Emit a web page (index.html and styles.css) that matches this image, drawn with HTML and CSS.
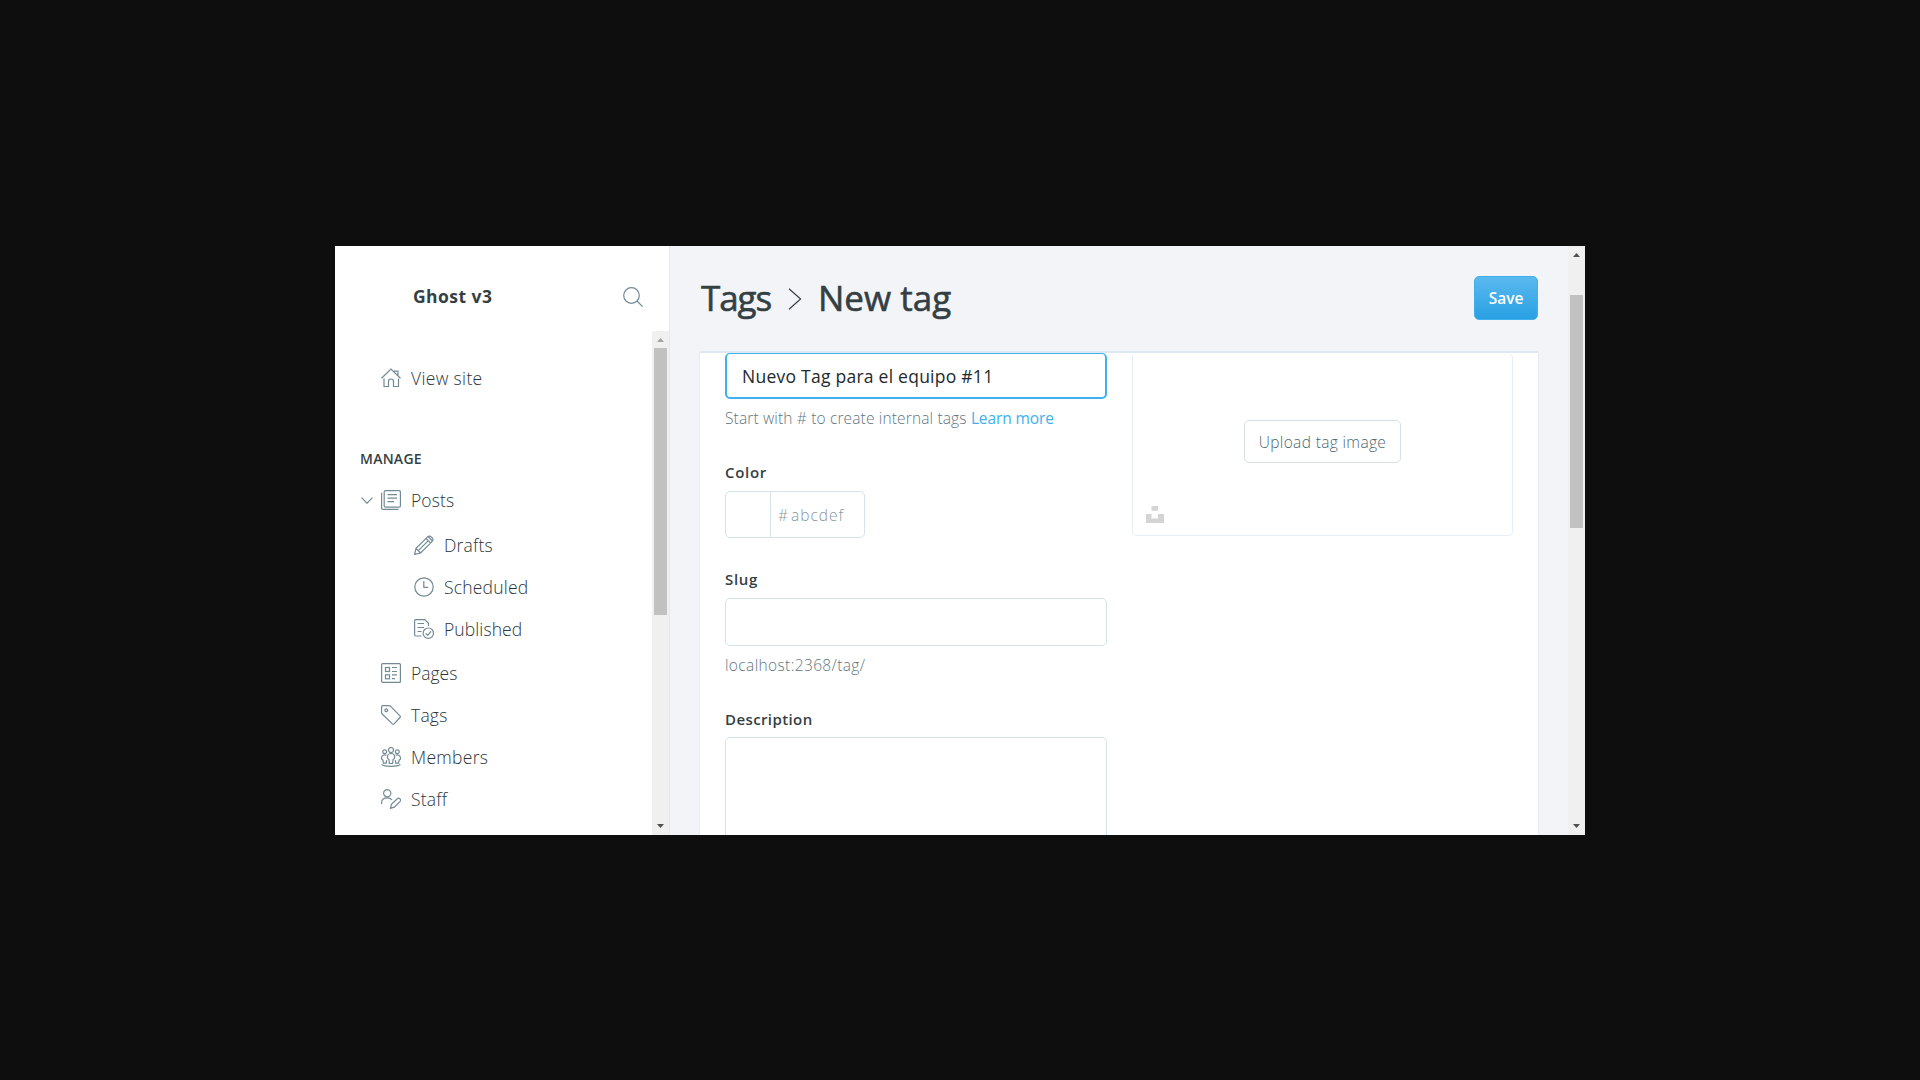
FILE: index.html
```html
<!DOCTYPE html>
<html lang="en">
<head>
<meta charset="utf-8">
<title>Ghost v3 - New tag</title>
<link rel="stylesheet" href="styles.css">
</head>
<body>
<div class="window">
  <aside class="sidebar">
    <header class="site-head">
      <span class="site-name">Ghost v3</span>
      <svg class="icon" viewBox="0 0 20 20"><circle cx="8.500" cy="8.500" r="7.800"/><path d="M14 14l5.600 5.600"/></svg>
    </header>
    <div class="side-body">
      <nav class="nav">
        <a class="nav-item view-site">
          <svg class="icon" viewBox="0 0 20 20"><path d="M.5 10.200L10 1l9.500 9.200M3 10.500V18.500h4.500V13.500a2.500 2.500 0 0 1 5 0V18.500H17.500V10.500M13 3.200h4V7.500"/></svg>
          <span>View site</span>
        </a>
        <h2 class="nav-title">MANAGE</h2>
        <a class="nav-item posts">
          <svg class="chevron" viewBox="0 0 12 7"><path d="M.5.7L6 6.200 11.500.7"/></svg>
          <svg class="icon" viewBox="0 0 20 20"><rect x="3.200" y=".6" width="16.200" height="16.500" rx="1.200"/><path d="M.6 2.800V18a1.400 1.400 0 0 0 1.400 1.400H17.500M6.500 4.700h9.500M6.500 8.200h9.500M6.500 11.600h6.500"/></svg>
          <span>Posts</span>
        </a>
        <div class="subnav">
          <a class="nav-item">
            <svg class="icon" viewBox="0 0 20 20"><path d="M.6 19.400l1.400-6L13.600 1.800a2.500 2.500 0 0 1 3.600 0l1 1a2.500 2.500 0 0 1 0 3.600L6.600 18zM2 13.400L6.600 18M12 3.400L16.600 8M14 1.500l4.500 4.500M4.300 15.700L14.300 5.700"/></svg>
            <span>Drafts</span>
          </a>
          <a class="nav-item">
            <svg class="icon" viewBox="0 0 20 20"><circle cx="10" cy="10" r="9.200"/><path d="M9.800 4v6.300h4.400"/></svg>
            <span>Scheduled</span>
          </a>
          <a class="nav-item published">
            <svg class="icon" viewBox="0 0 20 20"><path d="M7.500 17H1.800a1.200 1.200 0 0 1-1.200-1.200V1.800A1.200 1.200 0 0 1 1.800.6h9L14.500 4.300V7M3.500 4.500h6.500M3.500 8.500h6.500M3.500 12.500h4"/><circle cx="14.300" cy="14.200" r="5.200"/><path d="M11.700 14.400l2 2 3.300-4"/></svg>
            <span>Published</span>
          </a>
        </div>
        <a class="nav-item pages">
          <svg class="icon" viewBox="0 0 20 20"><rect x=".6" y=".6" width="18.800" height="18.800" rx="1"/><rect x="4.500" y="4.500" width="4" height="4"/><rect x="4.500" y="11.800" width="4" height="4"/><path d="M11 4.500h5M11 8.500h5M11 11.800h5M11 15.600h3"/></svg>
          <span>Pages</span>
        </a>
        <a class="nav-item">
          <svg class="icon" viewBox="0 0 20 20"><path d="M.6 1.800A1.200 1.200 0 0 1 1.800.6H8a2 2 0 0 1 1.400.6L19 10.800a1.200 1.200 0 0 1 0 1.700L13 18.900a1.200 1.200 0 0 1-1.700 0L1.200 9A2 2 0 0 1 .6 7.600z"/><circle cx="5.300" cy="5.300" r="1.400"/></svg>
          <span>Tags</span>
        </a>
        <a class="nav-item members">
          <svg class="icon" viewBox="0 0 20 20"><circle cx="10" cy="3" r="2.500"/><circle cx="3.700" cy="4.800" r="1.900"/><circle cx="16.300" cy="4.800" r="1.900"/><path d="M8.300 16.500L8 12.500 6.500 11.500V9.500a3.500 3 0 0 1 7 0v2L12 12.500l-.3 4zM5.500 8.300C3 7 .6 8.500.6 10.500v1.800l1.300.9.500 3H5.200l.5-3M14.500 8.300c2.500-1.300 4.900.2 4.900 2.200v1.800l-1.300.9-.5 3H14.800l-.5-3M.6 17.500c3 2.400 15.800 2.400 18.800 0"/></svg>
          <span>Members</span>
        </a>
        <a class="nav-item">
          <svg class="icon" viewBox="0 0 20 20"><circle cx="6.200" cy="4.200" r="3.600"/><path d="M.6 15V13.500C.6 10.500 3 8.800 6.200 8.800c2 0 3.800.8 4.800 2.200M9.500 19.300l.9-4 5.900-5.600c1.800-1.500 4.400.9 2.800 2.700l-5.800 5.800z"/></svg>
          <span>Staff</span>
        </a>
      </nav>
      <div class="scrollbar side-scroll">
        <i class="arrow up dim"></i><i class="thumb"></i><i class="arrow down"></i>
      </div>
    </div>
  </aside>
  <main class="main">
    <header class="main-head">
      <h1 class="title">
        <span class="crumb">Tags</span>
        <svg class="sep" viewBox="0 0 14 22"><path d="M1 .7L12.600 11 1 21.300"/></svg>
        <span>New tag</span>
      </h1>
      <button class="save">Save</button>
    </header>
    <section class="viewport">
      <div class="card">
        <div class="col">
          <div class="input name">Nuevo Tag para el equipo #11</div>
          <p class="help">Start with # to create internal tags <a class="link">Learn more</a></p>
          <label class="label color-label">Color</label>
          <div class="input color"><span class="swatch"></span><span class="hash">#</span><span class="hex">abcdef</span></div>
          <label class="label slug-label">Slug</label>
          <div class="input slug"></div>
          <p class="help host">localhost:2368/tag/</p>
          <label class="label">Description</label>
          <div class="input desc"></div>
        </div>
        <div class="uploader">
          <button class="upload">Upload tag image</button>
          <svg class="unsplash" viewBox="0 0 18 17"><path d="M5.500 0h6.500v4.700H5.500zM0 8h5.500v4.500h6.500V8H18v9H0z"/></svg>
        </div>
      </div>
    </section>
  </main>
  <div class="scrollbar main-scroll">
    <i class="arrow up"></i><i class="thumb"></i><i class="arrow down"></i>
  </div>
</div>
</body>
</html>
```
FILE: styles.css
```css
* { box-sizing: border-box; }
body {
  margin: 0;
  height: 1080px;
  overflow: hidden;
  padding: 246px 335px 0;
  background: #0e0e0e;
  color: #343f44;
  font-family: "Open Sans", "Noto Sans", sans-serif;
}
h1, h2, p { margin: 0; }
button { font-family: inherit; padding: 0; white-space: nowrap; }
.window { display: flex; height: 589px; background: #f3f4f8; overflow: hidden; }

.icon { width: 20px; height: 20px; flex: none; }
.icon, .chevron { fill: none; stroke: #738a94; stroke-width: 1.2; }

/* Sidebar */
.sidebar { display: flex; flex-direction: column; width: 335px; border-right: 1px solid #e5e8ef; background: #fff; }
.site-head { display: flex; align-items: center; justify-content: space-between; height: 85px; padding: 19px 26px 2px 78px; }
.site-name { font-size: 17.5px; font-weight: 700; line-height: 24px; letter-spacing: .45px; margin-bottom: 3px; }
.side-body { display: flex; flex: 1; justify-content: space-between; }
.nav { padding: 26px 0 0 46px; }
.nav-item {
  display: flex; align-items: center; gap: 10px; height: 42px;
  font-size: 17.5px; font-weight: 300; line-height: 42px; letter-spacing: .2px;
  color: #2b363b;
}
.view-site { letter-spacing: .35px; }
.published { letter-spacing: .1px; }
.pages { letter-spacing: 0; }
.members { letter-spacing: .3px; }
.nav-title { margin: 49px 0 9px -21px; font-size: 14px; font-weight: 600; line-height: 22px; letter-spacing: .25px; }
.posts { gap: 0; margin-left: -20px; letter-spacing: .1px; }
.posts .icon { margin: 0 10px 0 8px; }
.chevron { width: 12px; height: 7px; }
.subnav { padding: 3px 0 2px 33px; }

/* Scrollbars */
.scrollbar { display: flex; flex-direction: column; align-items: center; width: 17px; background: #f0f0f0; }
.arrow { width: 7px; height: 4px; background: #505050; }
.arrow.up { clip-path: polygon(50% 0, 100% 100%, 0 100%); }
.arrow.down { clip-path: polygon(0 0, 100% 0, 50% 100%); margin: auto 0 7px; }
.arrow.dim { background: #a3a3a3; }
.thumb { width: 13px; background: #c1c1c1; }
.side-scroll .up { margin: 7px 0 6px; }
.side-scroll .thumb { height: 267px; }
.main-scroll .up { margin: 7px 0 38px; }
.main-scroll .thumb { height: 233px; }

/* Page header */
.main { flex: 1; }
.main-head { display: flex; align-items: center; justify-content: space-between; height: 105px; padding: 0 30px 0 31px; }
.title {
  display: flex; align-items: center; margin-bottom: 1px;
  font-size: 35px; font-weight: 400; line-height: 44px; -webkit-text-stroke: .6px #343f44;
}
.crumb { letter-spacing: -1.1px; }
.sep { width: 14px; height: 22px; margin: 2px 16px 0 17px; fill: none; stroke: #343f44; stroke-width: 1.2; }
.save {
  width: 64px; height: 44px; border: 1px solid #3eb0ef; border-radius: 5px; margin-bottom: 1px;
  background: linear-gradient(#5ab9ef, #29a0e3); color: #fff; font-size: 15.5px; font-weight: 600;
}

/* Tag form */
.viewport { height: 484px; overflow: hidden; padding: 0 30px; }
.card {
  display: flex; gap: 25px; height: 484px; padding: 0 25px;
  background: #fff; border-top: 2px solid #dfe9f1; box-shadow: 0 0 2px #d8dde8;
}
.col { width: 382px; }
.input { border: 1px solid #d5e3eb; border-radius: 5px; background: #fff; }
.name {
  height: 46px; border: 2px solid #3eb0ef; border-top-width: 1px; padding-left: 15px;
  font-size: 17.5px; line-height: 44px; letter-spacing: .25px; color: #22292d;
}
.help { font-size: 15.5px; font-weight: 300; line-height: 20px; letter-spacing: .15px; color: #5f7681; margin-top: 9px; }
.host { letter-spacing: .37px; }
.link { color: #3eb0ef; font-weight: 400; letter-spacing: -.1px; }
.label { display: block; margin-top: 34px; font-size: 15px; font-weight: 600; line-height: 20px; letter-spacing: .4px; }
.color-label { letter-spacing: .7px; }
.slug-label { margin-top: 31px; letter-spacing: .7px; }
.color { display: flex; width: 140px; height: 47px; margin-top: 9px; font-size: 15.5px; font-weight: 300; line-height: 46px; color: #8798a1; }
.swatch { width: 45px; border-right: 1px solid #d5e3eb; }
.hash { width: 20px; padding-left: 7px; }
.hex { letter-spacing: 1px; }
.slug { height: 48px; margin-top: 9px; }
.desc { height: 120px; margin-top: 8px; }
.uploader {
  position: relative; display: flex; align-items: center; justify-content: center;
  width: 381px; height: 183px; padding-bottom: 5px;
  border: 1px solid #e5eff5; border-top: 0; border-radius: 5px;
}
.upload {
  width: 157px; height: 43px; border: 1px solid #d5e0e6; border-radius: 5px; background: #fff;
  color: #4d6671; font-size: 15.5px; font-weight: 300; letter-spacing: .35px;
}
.unsplash { position: absolute; left: 13px; bottom: 12px; width: 18px; height: 17px; fill: #d4d4d4; }
```
